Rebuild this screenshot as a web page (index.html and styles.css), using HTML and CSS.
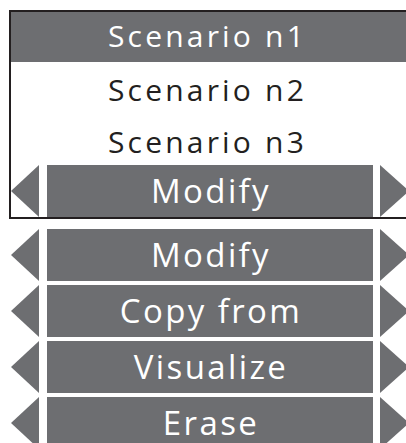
FILE: index.html
```html
<!DOCTYPE html>
<html lang="en">
<head>
    <meta charset="UTF-8">
    <meta name="viewport" content="width=device-width, initial-scale=1.0">
    <title>Scenarios</title>
    <link rel="stylesheet" href="styles.css">
</head>
<body>

    <div class="scenario-box">
        <div class="scenario selected">Scenario n1</div>
        <div class="scenario">Scenario n2</div>
        <div class="scenario">Scenario n3</div>
        <div class="action-row">
            <div class="arrow arrow-left"></div>
            <div class="action">Modify</div>
            <div class="arrow arrow-right"></div>
        </div>
    </div>

    <div class="actions">
        <div class="action-row">
            <div class="arrow arrow-left"></div>
            <div class="action">Modify</div>
            <div class="arrow arrow-right"></div>
        </div>
        <div class="action-row">
            <div class="arrow arrow-left"></div>
            <div class="action">Copy from</div>
            <div class="arrow arrow-right"></div>
        </div>
        <div class="action-row">
            <div class="arrow arrow-left"></div>
            <div class="action">Visualize</div>
            <div class="arrow arrow-right"></div>
        </div>
        <div class="action-row">
            <div class="arrow arrow-left"></div>
            <div class="action">Erase</div>
            <div class="arrow arrow-right"></div>
        </div>
    </div>

</body>
</html>
```

FILE: styles.css
```css
body {
    font-family: "Open Sans", "Liberation Sans", sans-serif;
    background-color: #fff;
    margin: 0;
    padding-top: 10px;
    overflow: hidden;
}
.scenario-box {
    margin-left: 9px;
    border: 2px solid #231f20;
    border-right: none;
}
.scenario {
    height: 49.5px;
    padding-top: 2px;
    line-height: 51.5px;
    text-align: center;
    font-size: 30px;
    letter-spacing: 3.2px;
    color: #231f20;
    padding-right: 2px;
}
.scenario.selected {
    height: 50px;
    padding-top: 0;
    line-height: 47px;
    background-color: #6d6e71;
    color: #fff;
}
.action-row {
    display: grid;
    grid-template-columns: 28px 326px 28px;
    column-gap: 8px;
    height: 52px;
}
.actions {
    margin-top: 10px;
    padding-left: 11px;
    display: flex;
    flex-direction: column;
    gap: 4px;
}
.action {
    background-color: #6d6e71;
    color: #fff;
    text-align: center;
    font-size: 33px;
    line-height: 52px;
    letter-spacing: 2.4px;
    text-indent: 2px;
}
.arrow {
    background-color: #6d6e71;
}
.arrow-left {
    clip-path: polygon(0 50%, 100% 0, 100% 100%);
}
.arrow-right {
    margin-left: -1px;
    clip-path: polygon(0 0, 100% 50%, 0 100%);
}
```
